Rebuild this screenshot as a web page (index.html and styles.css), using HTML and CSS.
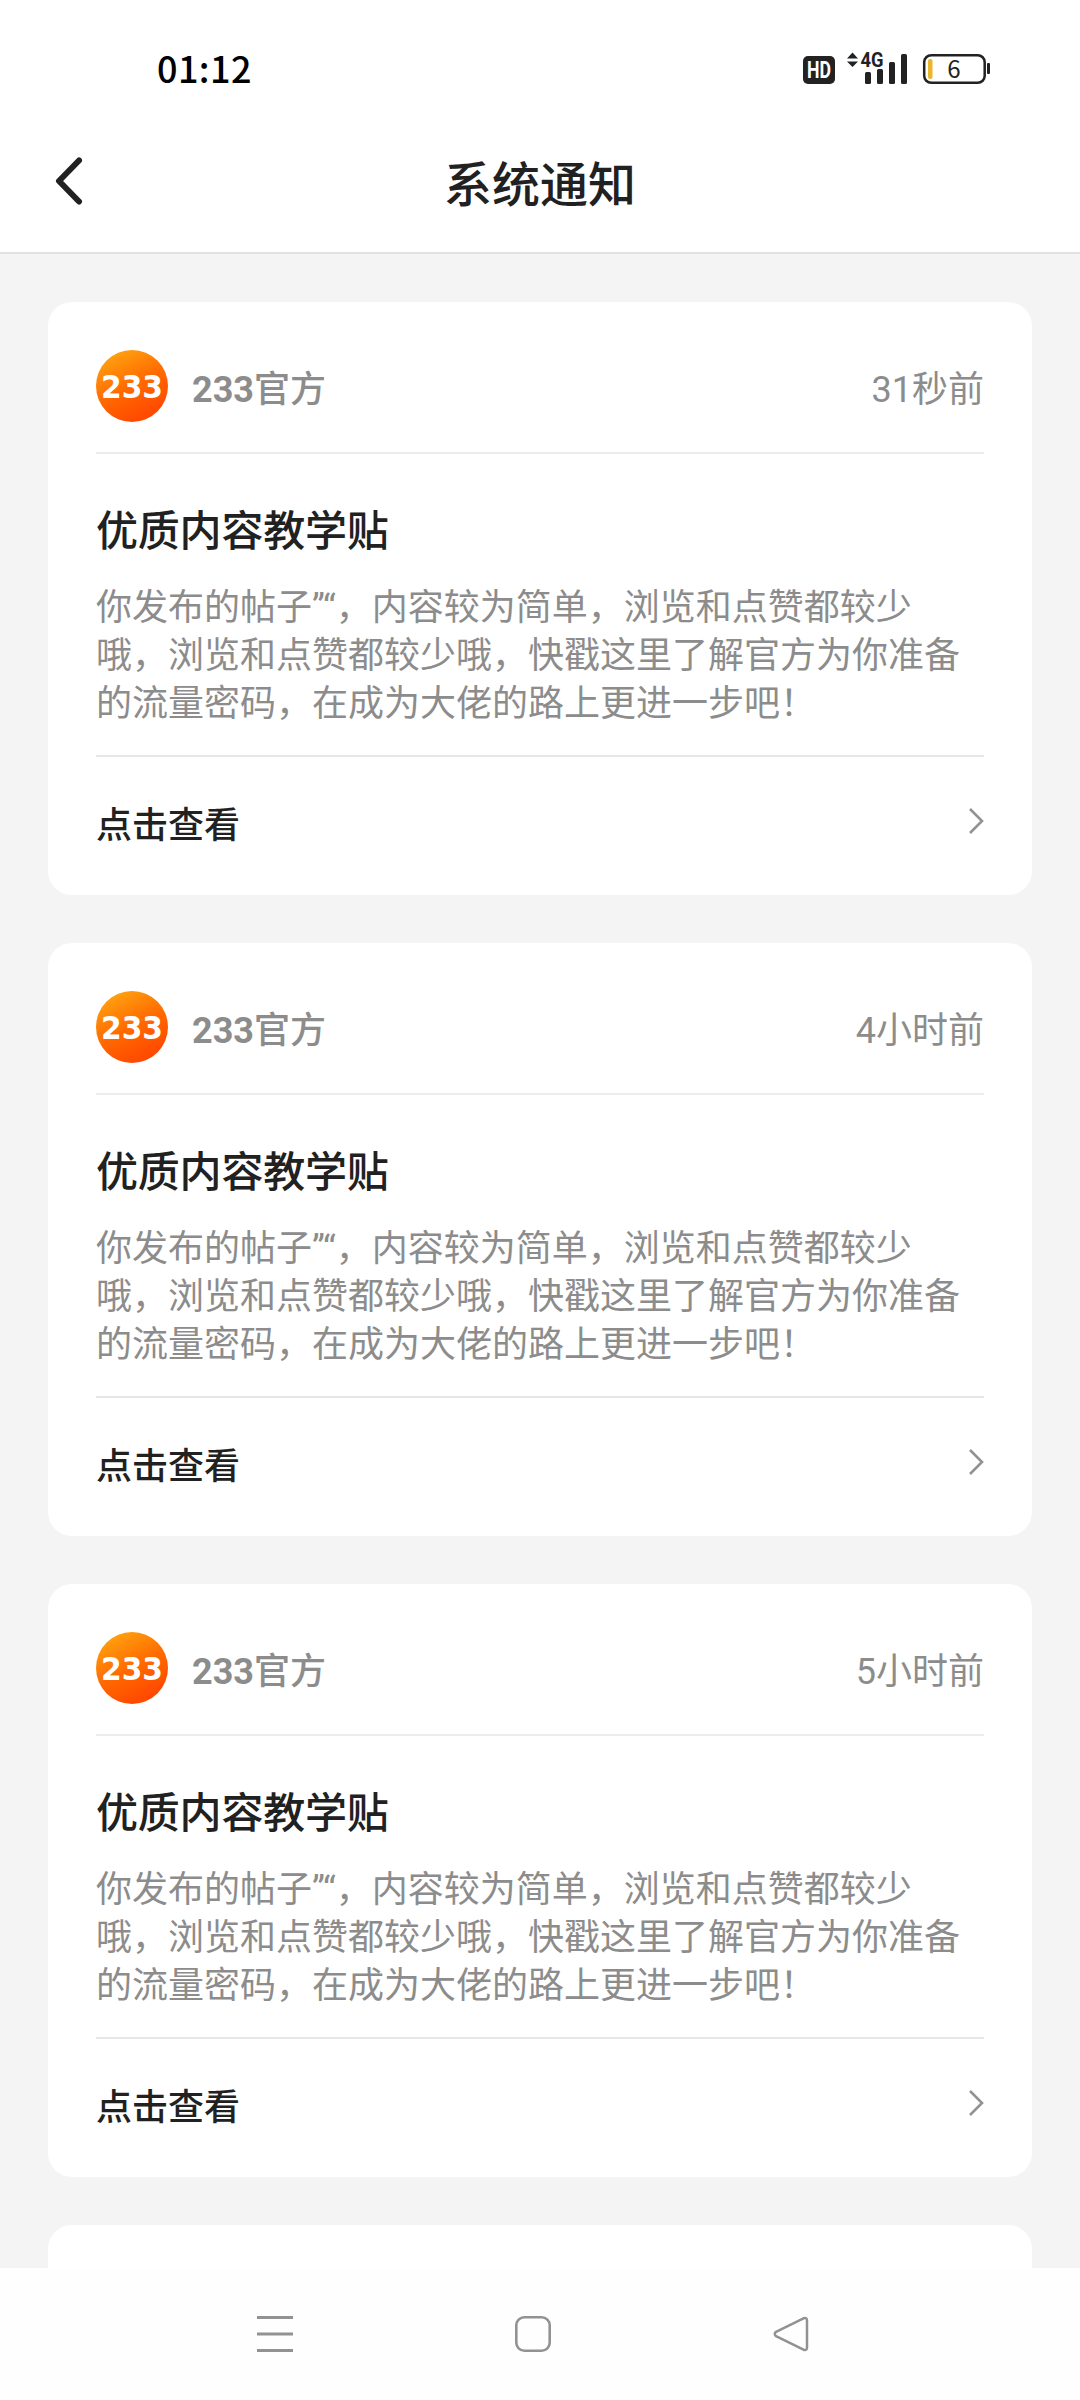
FILE: index.html
```html
<!DOCTYPE html>
<html lang="zh-CN">
<head>
<meta charset="utf-8">
<title>系统通知</title>
<link rel="stylesheet" href="styles.css">
</head>
<body>
<svg class="defs" width="0" height="0" aria-hidden="true">
  <defs>
    <linearGradient id="brand" x1="0.15" y1="0.05" x2="0.6" y2="0.95">
      <stop offset="0" stop-color="#ffa411"/>
      <stop offset="0.55" stop-color="#ff6a00"/>
      <stop offset="1" stop-color="#ff4a00"/>
    </linearGradient>
    <symbol id="logo" viewBox="0 0 72 72">
      <circle cx="36" cy="36" r="36" fill="url(#brand)"/>
      <text class="logo-text" x="5" y="47.500" textLength="62" lengthAdjust="spacingAndGlyphs">233</text>
    </symbol>
    <symbol id="chevron" viewBox="0 0 16 28">
      <path d="M2 2 L14 14 L2 26" fill="none" stroke="#929292" stroke-width="2.6"/>
    </symbol>
  </defs>
</svg>
<div class="screen">
  <div class="status">
    <span class="clock">01:12</span>
    <svg class="status-icons" width="190" height="48" viewBox="0 -6 190 48">
      <rect x="3" y="6" width="32" height="28" rx="5" fill="#222"/>
      <text class="hd" x="7" y="28" textLength="24" lengthAdjust="spacingAndGlyphs">HD</text>
      <path d="M52.500 2.500 L58 8.500 H47 Z M52.500 17 L58 11.500 H47 Z" fill="#222"/>
      <text class="net" x="60.500" y="17" textLength="23" lengthAdjust="spacingAndGlyphs">4G</text>
      <g fill="#222">
        <rect x="65" y="22" width="6" height="12" rx="1.500"/>
        <rect x="77" y="19" width="6" height="15" rx="1.500"/>
        <rect x="89" y="12" width="6" height="22" rx="1.500"/>
        <rect x="101" y="4" width="6" height="30" rx="1.500"/>
        <rect x="187" y="13" width="3" height="11" rx="1"/>
      </g>
      <rect x="124.200" y="5.200" width="60.500" height="27.600" rx="7" fill="none" stroke="#222" stroke-width="2.500"/>
      <rect x="128" y="9" width="4.500" height="20" rx="2" fill="#e9b62c"/>
      <text class="level" x="154" y="28" text-anchor="middle">6</text>
    </svg>
  </div>
  <header class="header">
    <svg class="back" width="28" height="48" viewBox="0 0 28 48">
      <path d="M24 3.500 L4 24 L24 44.500" fill="none" stroke="#212121" stroke-width="6" stroke-linecap="round" stroke-linejoin="round"/>
    </svg>
    <h1 class="title">系统通知</h1>
  </header>
  <main class="list">
    <article class="card">
      <div class="card-head">
        <svg class="avatar" width="72" height="72"><use href="#logo"/></svg>
        <span class="name"><b>233</b>官方</span>
        <span class="time">31秒前</span>
      </div>
      <div class="card-body">
        <h2 class="subject">优质内容教学贴</h2>
        <p class="text">你发布的帖子”“，内容较为简单，浏览和点赞都较少<br>哦，浏览和点赞都较少哦，快戳这里了解官方为你准备<br>的流量密码，在成为大佬的路上更进一步吧！</p>
      </div>
      <div class="card-foot">
        <span class="action">点击查看</span>
        <svg class="chevron" width="16" height="28"><use href="#chevron"/></svg>
      </div>
    </article>
    <article class="card">
      <div class="card-head">
        <svg class="avatar" width="72" height="72"><use href="#logo"/></svg>
        <span class="name"><b>233</b>官方</span>
        <span class="time">4小时前</span>
      </div>
      <div class="card-body">
        <h2 class="subject">优质内容教学贴</h2>
        <p class="text">你发布的帖子”“，内容较为简单，浏览和点赞都较少<br>哦，浏览和点赞都较少哦，快戳这里了解官方为你准备<br>的流量密码，在成为大佬的路上更进一步吧！</p>
      </div>
      <div class="card-foot">
        <span class="action">点击查看</span>
        <svg class="chevron" width="16" height="28"><use href="#chevron"/></svg>
      </div>
    </article>
    <article class="card">
      <div class="card-head">
        <svg class="avatar" width="72" height="72"><use href="#logo"/></svg>
        <span class="name"><b>233</b>官方</span>
        <span class="time">5小时前</span>
      </div>
      <div class="card-body">
        <h2 class="subject">优质内容教学贴</h2>
        <p class="text">你发布的帖子”“，内容较为简单，浏览和点赞都较少<br>哦，浏览和点赞都较少哦，快戳这里了解官方为你准备<br>的流量密码，在成为大佬的路上更进一步吧！</p>
      </div>
      <div class="card-foot">
        <span class="action">点击查看</span>
        <svg class="chevron" width="16" height="28"><use href="#chevron"/></svg>
      </div>
    </article>
    <article class="card card-next"></article>
  </main>
  <nav class="navbar">
    <svg width="36" height="36" viewBox="0 0 36 36"><path d="M0 1.500 H36 M0 18 H36 M0 34.500 H36" stroke="#929292" stroke-width="3"/></svg>
    <svg width="36" height="36" viewBox="0 0 36 36"><rect x="1.300" y="1.300" width="33.400" height="33.400" rx="8" fill="none" stroke="#929292" stroke-width="2.600"/></svg>
    <svg width="36" height="36" viewBox="0 0 36 36"><path d="M30.500 2.300 L3 15.800 Q0.500 18 3 20.200 L30.500 33.700 Q34 34.800 34 31.500 V4.500 Q34 1.200 30.500 2.300 Z" fill="none" stroke="#929292" stroke-width="2.500" stroke-linejoin="round"/></svg>
  </nav>
</div>
</body>
</html>
```
FILE: styles.css
```css
* {
  box-sizing: border-box;
}

body {
  margin: 0;
  background: #fff;
  font-family: Roboto, "Noto Sans CJK SC", sans-serif;
  color: #212121;
}

.defs {
  position: absolute;
}

.screen {
  display: flex;
  flex-direction: column;
  width: 1080px;
  height: 2400px;
  overflow: hidden;
}

.status {
  display: flex;
  justify-content: space-between;
  align-items: flex-start;
  height: 110px;
  padding: 43px 90px 0 157px;
}

.status-icons {
  margin-top: 1px;
}

.clock {
  font: 500 36px/48px "Noto Sans CJK SC", sans-serif;
  letter-spacing: 0.4px;
  color: #000;
}

.hd {
  font: 700 23px Roboto, sans-serif;
  fill: #fff;
}

.net {
  font: 700 21px Roboto, sans-serif;
  fill: #222;
}

.level {
  font: 400 24px "Noto Sans CJK SC", sans-serif;
  fill: #222;
}

.header {
  display: grid;
  grid-template-columns: 28px 1fr 28px;
  align-items: center;
  height: 144px;
  padding: 0 55px;
  border-bottom: 2px solid #e2e2e2;
}

.title {
  margin: 10px 0 0;
  font-size: 48px;
  font-weight: 500;
  line-height: 64px;
  text-align: center;
}

.list {
  display: flex;
  flex: 1;
  flex-direction: column;
  gap: 48px;
  min-height: 0;
  padding: 48px 48px 0;
  overflow: hidden;
  background: #f4f4f4;
}

.card {
  flex: none;
  height: 593px;
  padding: 0 48px;
  border-radius: 24px;
  background: #fff;
}

.card-head {
  display: flex;
  align-items: center;
  gap: 24px;
  height: 152px;
  padding: 48px 0 30px;
  border-bottom: 2px solid #ececec;
  font-size: 36px;
  line-height: 48px;
  color: #8c8c8c;
}

.name {
  flex: 1;
  padding-top: 7px;
  font-weight: 500;
}

.time {
  padding-top: 7px;
}

.card-body {
  height: 303px;
  padding-top: 50px;
  border-bottom: 2px solid #e6e6e6;
}

.subject {
  margin: 0 0 24px;
  font-size: 42px;
  font-weight: 500;
  line-height: 56px;
  letter-spacing: -0.2px;
}

.text {
  margin: 0;
  font-size: 36px;
  font-weight: 400;
  line-height: 48px;
  color: #8c8c8c;
  white-space: nowrap;
}

.card-foot {
  display: flex;
  align-items: center;
  justify-content: space-between;
  height: 138px;
}

.action {
  font-size: 36px;
  font-weight: 500;
  line-height: 48px;
}

.chevron {
  margin-bottom: 10px;
}

.logo-text {
  font: 700 32px "DejaVu Sans", sans-serif;
  fill: #fff;
}

.navbar {
  display: flex;
  justify-content: space-between;
  height: 132px;
  padding: 48px 271px 0 257px;
  background: #fefefe;
}
```
